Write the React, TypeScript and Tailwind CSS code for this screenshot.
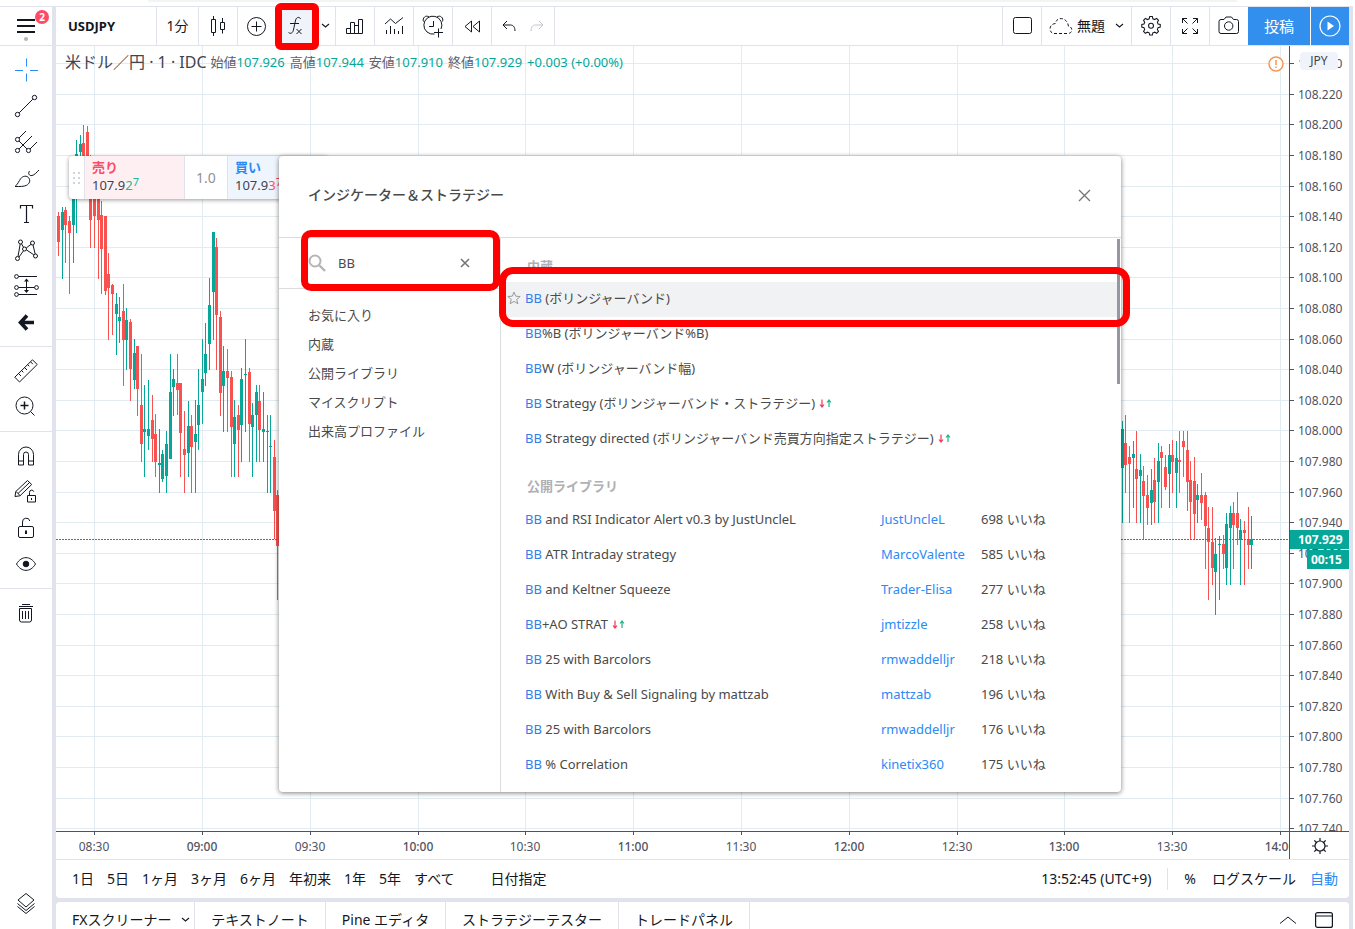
import React, { useState } from "react";

type Candle = [x: number, high: number, low: number, top: number, bottom: number, up: 0 | 1];

const CANDLES: Candle[] = [
  [2, 166, 210, 170, 196, 0], [6, 161, 233, 166, 184, 1], [9, 161, 217, 164, 179, 0], [13, 170, 248, 175, 187, 0],
  [17, 112, 217, 115, 179, 1], [20, 94, 187, 108, 150, 1], [24, 89, 112, 98, 106, 1], [27, 79, 140, 97, 120, 0],
  [31, 80, 150, 86, 130, 0], [34, 109, 202, 115, 174, 0], [38, 115, 202, 120, 170, 0], [42, 120, 233, 140, 174, 0],
  [45, 155, 248, 169, 203, 0], [49, 170, 249, 170, 245, 0], [52, 207, 294, 228, 242, 0], [56, 238, 289, 239, 248, 0],
  [60, 247, 309, 258, 268, 1], [63, 251, 297, 271, 275, 1], [67, 238, 340, 265, 294, 0], [70, 262, 324, 274, 294, 1],
  [74, 273, 355, 276, 323, 0], [78, 293, 343, 307, 334, 1], [81, 300, 370, 300, 343, 0], [85, 308, 416, 359, 398, 0],
  [88, 339, 431, 383, 386, 1], [92, 334, 404, 383, 390, 1], [96, 349, 416, 374, 393, 0], [99, 368, 431, 388, 416, 0],
  [103, 383, 447, 417, 419, 1], [106, 404, 436, 408, 433, 1], [110, 385, 447, 398, 430, 1], [114, 308, 413, 346, 413, 1],
  [117, 323, 370, 333, 341, 1], [121, 308, 369, 337, 344, 0], [124, 337, 431, 337, 387, 0], [128, 365, 447, 403, 409, 0],
  [132, 355, 431, 380, 407, 1], [135, 369, 447, 380, 401, 0], [139, 354, 447, 388, 396, 1], [142, 323, 404, 359, 379, 1],
  [146, 293, 378, 333, 346, 1], [149, 277, 340, 308, 327, 1], [153, 232, 324, 259, 298, 1], [157, 186, 294, 186, 246, 1],
  [160, 192, 324, 201, 269, 0], [164, 265, 370, 271, 347, 0], [167, 300, 386, 325, 340, 1], [171, 303, 386, 325, 332, 0],
  [175, 325, 431, 331, 381, 0], [178, 354, 431, 371, 398, 1], [182, 359, 431, 369, 384, 0], [185, 322, 416, 333, 379, 1],
  [189, 293, 386, 328, 329, 1], [193, 322, 416, 326, 378, 0], [196, 357, 431, 369, 381, 1], [200, 339, 416, 346, 369, 1],
  [203, 339, 416, 355, 384, 0], [207, 346, 416, 383, 386, 1], [211, 369, 447, 385, 386, 1], [214, 369, 447, 400, 401, 1],
  [218, 394, 493, 411, 465, 0], [221, 444, 554, 449, 500, 0],
  [1066, 375, 477, 383, 422, 1], [1069, 369, 447, 397, 419, 0], [1073, 400, 477, 411, 418, 0], [1077, 395, 462, 408, 412, 1],
  [1080, 385, 477, 423, 433, 0], [1084, 408, 477, 424, 430, 1], [1087, 420, 494, 435, 450, 0], [1091, 429, 479, 449, 462, 0],
  [1095, 423, 479, 444, 457, 1], [1098, 412, 477, 434, 456, 0], [1102, 397, 477, 415, 436, 1], [1105, 400, 462, 406, 412, 0],
  [1109, 409, 444, 421, 441, 0], [1113, 398, 462, 409, 428, 1], [1116, 394, 447, 409, 416, 0], [1120, 395, 462, 412, 427, 1],
  [1123, 385, 447, 414, 416, 0], [1127, 385, 431, 395, 401, 0], [1131, 385, 465, 404, 436, 0], [1134, 415, 494, 434, 456, 0],
  [1138, 411, 494, 435, 468, 0], [1141, 438, 477, 449, 454, 1], [1145, 427, 474, 449, 457, 0], [1149, 446, 523, 449, 480, 0],
  [1152, 461, 554, 482, 496, 0], [1156, 461, 539, 496, 522, 0], [1159, 492, 569, 508, 526, 1], [1163, 490, 554, 498, 499, 1],
  [1167, 489, 523, 498, 508, 0], [1170, 467, 539, 478, 522, 1], [1174, 460, 539, 467, 482, 1], [1177, 456, 523, 467, 479, 0],
  [1181, 446, 499, 467, 482, 0], [1184, 473, 539, 484, 494, 1], [1188, 475, 539, 484, 487, 0], [1192, 461, 523, 493, 499, 0],
  [1195, 470, 523, 493, 499, 1],
];

const PRICES = Array.from({ length: 26 }, (_, i) => ({
  label: (108.24 - i * 0.02).toFixed(3),
  y: Math.floor(17.6 + i * 30.6),
}));

const TIMES = ["08:30", "09:00", "09:30", "10:00", "10:30", "11:00", "11:30", "12:00", "12:30", "13:00", "13:30", "14:00"].map(
  (label, i) => ({ label, x: Math.floor(38.6 + i * 107.8) })
);

const Svg: React.FC<{ children: React.ReactNode; color?: string }> = ({ children, color = "#131722" }) => (
  <svg width="28" height="28" viewBox="0 0 28 28" fill="none" stroke={color} strokeWidth="1" aria-hidden="true">
    {children}
  </svg>
);

const Chevron: React.FC = () => (
  <svg width="9" height="6" viewBox="0 0 9 6" fill="none" stroke="#131722" strokeWidth="1.1" aria-hidden="true">
    <path d="M1 1l3.500 3L8 1" />
  </svg>
);

const TOOL_GROUPS: { name: string; icon: React.ReactNode }[][] = [
  [
    {
      name: "クロス",
      icon: <path stroke="#2a8af6" d="M14.500 2.500v8M14.500 17.500v8M3 14.500h8M18 14.500h8" />,
    },
    {
      name: "トレンドライン",
      icon: (
        <>
          <circle cx="5.500" cy="22.500" r="2.200" />
          <circle cx="22.500" cy="5.500" r="2.200" />
          <path d="M7.200 20.800L20.800 7.200" />
        </>
      ),
    },
    {
      name: "ピッチフォーク",
      icon: (
        <>
          <circle cx="5.500" cy="11.500" r="2.100" />
          <circle cx="5.500" cy="22.500" r="2.100" />
          <circle cx="16.500" cy="22.500" r="2.100" />
          <path d="M7 10l7-7M7 21L20 8M18 21l7-7M7 13l8 8" />
        </>
      ),
    },
    {
      name: "ブラシ",
      icon: (
        <>
          <path d="M3 22.500c2.800-2 3.800-5.500 5.800-8 2.200-2.800 6-3 7.800-.8 2.200 2.600 1 6-2 7.600-3 1.400-7 1.200-11.600 1.200z" />
          <path d="M17.500 7c-1.800 2.500-.2 5.200 2.500 4.500C22.500 11 24.500 8.500 27 6" />
        </>
      ),
    },
    {
      name: "テキスト",
      icon: <path strokeWidth="1.200" d="M8.500 8.500V5.500h12v3M14.500 5.500v17M12 22.500h5" />,
    },
    {
      name: "パターン",
      icon: (
        <>
          <circle cx="8.500" cy="6" r="2" />
          <circle cx="20.500" cy="7" r="2" />
          <circle cx="12.500" cy="13" r="2" />
          <circle cx="5.500" cy="22.500" r="2" />
          <circle cx="23.500" cy="20" r="2" />
          <path d="M8.200 8L6 20.500M9.500 7.800l2 3.500M7 21l4.500-6.200M14.200 12l5-3.800M14.400 13.800l7.400 5M21 9l2.200 9" />
        </>
      ),
    },
    {
      name: "予測",
      icon: (
        <>
          <circle cx="4.500" cy="4.500" r="1.900" />
          <circle cx="4.500" cy="15.500" r="1.900" />
          <circle cx="24.500" cy="15.500" r="1.900" />
          <circle cx="4.500" cy="22.500" r="1.900" />
          <path d="M6.500 4.500H25M6.500 15.500h16M6.500 22.500H25M14.500 7v12" />
          <path fill="#131722" stroke="none" d="M12 9.500l2.500-3 2.500 3zM12 18l2.500 3 2.500-3z" />
        </>
      ),
    },
    {
      name: "矢印",
      icon: <path strokeWidth="3.600" d="M22 14.500H9.500M15 7.500l-6.500 7 6.500 7" />,
    },
  ],
  [
    {
      name: "ものさし",
      icon: (
        <>
          <path d="M2.800 20.200L20.500 2.800l4.700 4.700L7.500 25z" />
          <path d="M6.500 16.500l2.500 2.500M9.500 13.500l1.800 1.800M12.500 10.500l2.500 2.500M15.500 7.500l1.800 1.800M18.500 4.800l2.300 2.300" />
        </>
      ),
    },
    {
      name: "ズームイン",
      icon: (
        <>
          <circle cx="12.500" cy="12.500" r="8.500" />
          <path d="M18.500 18.500l4 4" />
          <path strokeWidth="1.500" d="M8.500 12.500h8M12.500 8.500v8" />
        </>
      ),
    },
  ],
  [
    {
      name: "マグネット",
      icon: <path d="M6.500 23V12.500a7.500 7.500 0 0 1 15 0V23h-5V12.500a2.500 2.500 0 0 0-5 0V23zM6.500 19h5M16.500 19h5" />,
    },
    {
      name: "描画モードを維持",
      icon: (
        <>
          <path d="M3 18.500l.8-5L15.500 2.500l4.200 4L8 17.800zM4 13.500l4 4M6 15.500L17.500 4.500" />
          <path d="M15.500 17.500h8v6.500h-8zM17.500 17.500v-3a2.200 2.200 0 0 1 4.300-.8M19.500 20v2" />
        </>
      ),
    },
    {
      name: "ロック",
      icon: (
        <>
          <rect x="6.500" y="12.500" width="15" height="11" rx="1.500" />
          <path d="M10.500 12.500V8a3.700 3.700 0 0 1 7.300-1" />
          <path strokeWidth="2" d="M14 16.500v3.500" />
        </>
      ),
    },
    {
      name: "表示",
      icon: (
        <>
          <path d="M4.500 14c5-8.500 14-8.500 19 0-5 8.500-14 8.500-19 0z" />
          <circle cx="14" cy="14" r="2.800" fill="#131722" />
        </>
      ),
    },
  ],
  [
    {
      name: "削除",
      icon: (
        <>
          <path d="M10 5.500h8M7 7.500h14" />
          <path d="M7.500 9.500h12v11.500a2 2 0 0 1-2 2h-8a2 2 0 0 1-2-2zM10.500 12v8M13.500 12v8M16.500 12v8" />
        </>
      ),
    },
  ],
];

const LeftToolbar: React.FC = () => (
  <aside className="flex w-[52px] shrink-0 flex-col bg-white">
    <button aria-label="メニュー" className="relative flex h-10 shrink-0 items-center justify-center border-y border-[#e0e3eb]">
      <svg width="18" height="14" viewBox="0 0 18 14" stroke="#131722" strokeWidth="2" aria-hidden="true">
        <path d="M0 1h18M0 7h18M0 13h18" />
      </svg>
      <span className="absolute top-[3px] right-[3px] h-[14px] w-[14px] rounded-full bg-[#ff4a68] text-center text-[10px] leading-[14px] font-bold text-white">
        2
      </span>
      <span className="absolute bottom-1 left-6 h-1 w-1 rounded-full bg-[#b2b5be]" />
    </button>
    {TOOL_GROUPS.map((group, i) => (
      <div key={i} className={`py-1.5 ${i < 3 ? "border-b border-[#e0e3eb]" : ""}`}>
        {group.map((tool) => (
          <button key={tool.name} aria-label={tool.name} className="flex h-9 w-full items-center justify-center">
            <Svg>{tool.icon}</Svg>
          </button>
        ))}
      </div>
    ))}
    <button aria-label="オブジェクトツリー" className="mt-auto mb-2 flex h-9 items-center justify-center">
      <Svg>
        <path d="M14 4.500l8 6.500-8 7-8-7z" />
        <path d="M5.500 14.500l8.500 7 8.500-7M5.500 17.500l8.500 7 8.500-7" />
      </Svg>
    </button>
  </aside>
);

const cell = "flex h-full items-center border-r border-[#e0e3eb]";

const Header: React.FC = () => (
  <header className="flex h-10 shrink-0 border-y border-[#e0e3eb] bg-white text-sm leading-5">
    <button className={`${cell} w-[101px] pl-3 text-[13px] font-bold`}>USDJPY</button>
    <button className={`${cell} w-[42px] justify-center`}>1分</button>
    <button aria-label="ローソク足" className={`${cell} w-[39px] justify-center`}>
      <Svg>
        <path d="M7.500 7.500h4v13h-4zM9.500 4v3.500M9.500 20.500V24M16.500 10.500h4v7h-4zM18.500 6v4.500M18.500 17.500v4" />
      </Svg>
    </button>
    <button aria-label="比較" className={`${cell} w-[38px] justify-center`}>
      <Svg>
        <circle cx="13.500" cy="14.500" r="9" />
        <path d="M8.500 14.500h10M13.500 9.500v10" />
      </Svg>
    </button>
    <div className={`${cell} w-[60px]`}>
      <button aria-label="インジケーター" className="flex h-full w-[39px] items-center justify-center bg-[#f0f3fa]">
        <Svg>
          <path d="M18.500 7c-.4-2-3.800-2.500-4.800.8C12.900 10.500 12.200 15 11.300 18.500c-.8 3.200-3.600 3.500-4.800 1.800M8 11.500h9" />
          <path d="M14.500 17l5 5M19.500 17l-5 5" />
        </Svg>
      </button>
      <button aria-label="お気に入りのインジケーター" className="flex h-full flex-1 items-center justify-center">
        <Chevron />
      </button>
    </div>
    <button aria-label="財務" className={`${cell} w-[39px] justify-center`}>
      <Svg>
        <path d="M5.500 16.500h4v5h-4zM9.500 10.500h4v11h-4zM13.500 13.500h4v8h-4zM17.500 7.500h4v14h-4z" />
      </Svg>
    </button>
    <button aria-label="テンプレート" className={`${cell} w-[39px] justify-center`}>
      <Svg>
        <path d="M5 12l5.500-5 5 4.500L23 5.500M6.500 18v4M10.500 14v8M14.500 17v5M18.500 19v3M22.500 14v8" />
      </Svg>
    </button>
    <button aria-label="アラート" className={`${cell} w-[39px] justify-center`}>
      <Svg>
        <path d="M22 17A9 9 0 1 0 15.500 22M14.500 9v5.500H10M19.500 16.500v9M15 20.500h9" />
        <path d="M4.500 9.500C3 6 7 2.500 10 5M23.500 9.500C25 6 21 2.500 18 5" />
      </Svg>
    </button>
    <button aria-label="リプレイ" className={`${cell} w-[39px] justify-center`}>
      <Svg>
        <path d="M13.500 9v11L7 14.500zM21.500 9v11L15 14.500z" />
      </Svg>
    </button>
    <div className={`${cell} w-[63px] justify-center`}>
      <button aria-label="元に戻す">
        <Svg>
          <path d="M12 9l-4 4 4 4M8 13h7.500c3 0 4.500 2.500 4.500 6" />
        </Svg>
      </button>
      <button aria-label="やり直し">
        <Svg color="#c1c4cd">
          <path d="M16 9l4 4-4 4M20 13h-7.500c-3 0-4.500 2.500-4.500 6" />
        </Svg>
      </button>
    </div>

    <div className="ml-auto flex h-full">
      <button aria-label="レイアウト" className={`${cell} w-10 justify-center border-l`}>
        <Svg>
          <rect x="5.500" y="5.500" width="18" height="16" rx="2" />
        </Svg>
      </button>
      <button className={`${cell} w-[90px] justify-center gap-1`}>
        <svg width="24" height="18" viewBox="0 0 24 18" fill="none" stroke="#131722" strokeDasharray="3 2" aria-hidden="true">
          <path d="M5 16.500h14c5 0 5-7 .5-7C18.500 -.5 7 -.5 6.500 6.500 -.5 7 -.5 16 5 16.500z" />
        </svg>
        無題
        <span className="ml-1.5">
          <Chevron />
        </span>
      </button>
      <button aria-label="設定" className={`${cell} w-[39px] justify-center`}>
        <Svg>
          <g transform="translate(1.700 .6) scale(.88)" strokeWidth="1.200">
            <path d="M12.500 4.500h3l.6 2.500 2 .9 2.300-1.300 2.100 2.100-1.300 2.300.8 2 2.500.5v3l-2.500.6-.8 2 1.300 2.300-2.100 2.100-2.300-1.300-2 .8-.6 2.500h-3l-.6-2.500-2-.8-2.300 1.300-2.100-2.100 1.300-2.300-.8-2-2.500-.6v-3l2.500-.5.800-2-1.300-2.300 2.100-2.100L9.900 7.900l2-.9z" />
            <circle cx="14" cy="15" r="2.800" />
          </g>
        </Svg>
      </button>
      <button aria-label="全画面" className={`${cell} w-[39px] justify-center`}>
        <Svg>
          <path d="M6.500 11V6.500H11M6.500 6.500l5 5M17 6.500h4.500V11M21.500 6.500l-5 5M6.500 17v4.500H11M6.500 21.500l5-5M17 21.500h4.500V17M21.500 21.500l-5-5" />
        </Svg>
      </button>
      <button aria-label="スナップショット" className="flex h-full w-[38px] items-center justify-center">
        <Svg>
          <path d="M6 7.500h3l2-2.500h5.500l2 2.500H21.500a2 2 0 0 1 2 2v10a2 2 0 0 1-2 2H6a2 2 0 0 1-2-2v-10a2 2 0 0 1 2-2z" />
          <circle cx="13.700" cy="14" r="4.200" />
        </Svg>
      </button>
      <button className="mr-px flex h-full w-[62px] items-center justify-center bg-[#338fee] text-[15px] text-white">投稿</button>
      <button aria-label="再生" className="flex h-full w-[38px] items-center justify-center bg-[#338fee]">
        <Svg color="#fff">
          <circle cx="14" cy="14" r="10" strokeWidth="1.200" />
          <path fill="#fff" stroke="none" d="M11.500 9.500l6.500 4.500-6.500 4.500z" />
        </Svg>
      </button>
    </div>
  </header>
);

const Plot: React.FC = () => (
  <svg className="h-full w-full" shapeRendering="crispEdges" aria-label="USDJPY チャート">
    {PRICES.map((p) => (
      <rect key={p.label} x="0" y={p.y} width="100%" height="1" fill="#e1ecf2" />
    ))}
    {TIMES.map((t) => (
      <rect key={t.label} x={t.x} y="0" width="1" height="100%" fill="#e1ecf2" />
    ))}
    {CANDLES.map(([x, high, low, top, bottom, up]) => (
      <g key={x} fill={up ? "#06a799" : "#f7524f"}>
        <rect x={x} y={high} width="1" height={low - high} />
        <rect x={x - 1} y={top} width="3" height={bottom - top} />
      </g>
    ))}
    <line x1="0" x2="100%" y1="493.500" y2="493.500" stroke="#0a9b8e" strokeDasharray="2 1" />
  </svg>
);

const LEGEND = [
  ["始値", "107.926"],
  ["高値", "107.944"],
  ["安値", "107.910"],
  ["終値", "107.929"],
];

const Legend: React.FC = () => (
  <div className="absolute top-1.5 left-[9px] flex items-center text-[13px] leading-5 whitespace-nowrap text-[#06a799]">
    <span className="mr-1 text-base leading-5 text-[#41444f]">米ドル／円 · 1 · IDC</span>
    <span className="flex gap-[5px]">
      {LEGEND.map(([label, value]) => (
        <span key={label}>
          <span className="text-[#5d606b]">{label}</span>
          {value}
        </span>
      ))}
      <span>+0.003 (+0.00%)</span>
    </span>
  </div>
);

const QuotePanel: React.FC = () => (
  <div className="absolute top-[110px] left-[13px] flex h-[43px] overflow-hidden rounded bg-white text-[#41444f] shadow-[0_1px_4px_rgba(0,0,0,0.4)]">
    <span className="grid w-[15px] grid-cols-[2px_2px] content-center justify-center gap-[3px]">
      {Array.from({ length: 6 }, (_, i) => (
        <i key={i} className="h-0.5 w-0.5 bg-[#d1d4dc]" />
      ))}
    </span>
    <button className="w-[101px] border-x border-[#e0e3eb] bg-[#fef0f2] pb-1 pl-[7px] text-left text-[13px] leading-[18px]">
      <b className="block text-[#ff4a68]">売り</b>
      <span className="block">
        107.9<span className="text-[#22b795]">2<span className="relative -top-1 text-[11px] leading-none">7</span></span>
      </span>
    </button>
    <button className="w-[42px] text-sm text-[#8f929c]">1.0</button>
    <button className="w-[101px] border-l border-[#e0e3eb] bg-[#eff5fd] pb-1 pl-[7px] text-left text-[13px] leading-[18px]">
      <b className="block text-[#2a8af6]">買い</b>
      <span className="block">
        107.9<span className="text-[#ff4a68]">3<span className="relative -top-1 text-[11px] leading-none">7</span></span>
      </span>
    </button>
  </div>
);

const PriceAxis: React.FC = () => (
  <div className="relative w-[60px] shrink-0 overflow-hidden border-l border-[#50535e] text-xs">
    <svg className="h-full w-full" shapeRendering="crispEdges" aria-label="価格">
      {PRICES.map((p) => (
        <g key={p.label}>
          <rect x="0" y={p.y} width="4" height="1" fill="#50535e" />
          <text x="8" y={p.y + 5} fill="#50535e">
            {p.label}
          </text>
        </g>
      ))}
    </svg>
    <button className="absolute top-1.5 left-2.5 h-[18px] w-[38px] rounded bg-[#f0f3fa] text-xs leading-[18px] text-[#41444f]">JPY</button>
    <span className="absolute top-[484px] right-0 left-0 h-[19px] bg-[#06a799] pl-2 text-xs leading-[19px] font-bold text-white">
      107.929
    </span>
    <span className="absolute top-[504px] right-0 h-[19px] w-[42px] bg-[#06a799] pl-1 text-xs leading-[19px] font-bold text-white">
      00:15
    </span>
  </div>
);

const Chart: React.FC = () => (
  <section className="flex min-h-0 flex-1 flex-col bg-white">
    <div className="flex min-h-0 flex-1 border-b border-[#50535e]">
      <div className="relative min-w-0 flex-1 overflow-hidden">
        <Plot />
        <Legend />
        <QuotePanel />
        <span className="absolute top-2.5 right-[5px]">
          <svg width="16" height="16" viewBox="0 0 16 16" fill="#fff" stroke="#fb9450" strokeWidth="1.500" aria-hidden="true">
            <circle cx="8" cy="8" r="7" />
            <path d="M8 4v5M8 10.500v1.500" />
          </svg>
        </span>
      </div>
      <PriceAxis />
    </div>
    <div className="flex h-7 shrink-0 border-b border-[#e0e3eb] text-xs">
      <svg className="h-full min-w-0 flex-1" aria-label="時間">
        {TIMES.map((t, i) => (
          <g key={t.label}>
            <rect x={t.x} y="0" width="1" height="3" fill="#50535e" />
            <text x={t.x} y="19" textAnchor="middle" fill="#50535e" fontWeight={i % 2 ? 500 : 400}>
              {t.label}
            </text>
          </g>
        ))}
      </svg>
      <button aria-label="軸の設定" className="flex w-[60px] items-center justify-center border-l border-[#50535e]">
        <svg width="16" height="16" viewBox="0 0 16 16" fill="none" stroke="#131722" strokeWidth="1.200" aria-hidden="true">
          <circle cx="8" cy="8" r="5" />
          <path d="M8 0v3M8 13v3M0 8h3M13 8h3M2.300 2.300l2.200 2.200M11.500 11.500l2.200 2.200M2.300 13.700l2.200-2.200M11.500 4.500l2.200-2.200" />
        </svg>
      </button>
    </div>
  </section>
);

const RANGES = ["1日", "5日", "1ヶ月", "3ヶ月", "6ヶ月", "年初来", "1年", "5年", "すべて"];

const RangeBar: React.FC = () => (
  <div className="flex h-[38px] shrink-0 items-center rounded-b bg-white pr-[11px] pl-4 text-sm leading-5 text-[#131722]">
    <div className="flex gap-[13px]">
      {RANGES.map((r) => (
        <button key={r}>{r}</button>
      ))}
    </div>
    <button className="ml-9">日付指定</button>
    <button className="ml-auto">13:52:45 (UTC+9)</button>
    <span className="mx-4 h-[22px] w-px bg-[#e0e3eb]" />
    <button>%</button>
    <button className="ml-4">ログスケール</button>
    <button className="ml-3.5 text-[#2a8af6]">自動</button>
  </div>
);

const BottomTabs: React.FC = () => (
  <footer className="flex h-[27px] shrink-0 overflow-hidden rounded-t bg-white text-sm text-[#131722]">
    <button className="flex h-9 w-[139px] items-center justify-between border-r border-[#e0e3eb] pr-1 pl-4">
      FXスクリーナー
      <Chevron />
    </button>
    <button className="h-9 w-[131px] border-r border-[#e0e3eb]">テキストノート</button>
    <button className="h-9 w-[120px] border-r border-[#e0e3eb]">Pine エディタ</button>
    <button className="h-9 w-[173px] border-r border-[#e0e3eb]">ストラテジーテスター</button>
    <button className="h-9 w-[131px] border-r border-[#e0e3eb]">トレードパネル</button>
    <div className="ml-auto flex h-9 items-center gap-[18px] pr-4">
      <button aria-label="パネルを開く">
        <svg width="18" height="8" viewBox="0 0 18 8" fill="none" stroke="#131722" aria-hidden="true">
          <path d="M1 7.500L9 1l8 6.500" />
        </svg>
      </button>
      <button aria-label="パネルを最大化">
        <svg width="18" height="16" viewBox="0 0 18 16" fill="none" stroke="#131722" strokeWidth="1.200" aria-hidden="true">
          <rect x=".6" y=".6" width="16.800" height="14.800" rx="2" />
          <path d="M.6 4h16.800" />
        </svg>
      </button>
    </div>
  </footer>
);

const CATEGORIES = ["お気に入り", "内蔵", "公開ライブラリ", "マイスクリプト", "出来高プロファイル"];

const BUILT_INS = [
  { rest: " (ボリンジャーバンド)" },
  { rest: "%B (ボリンジャーバンド%B)" },
  { rest: "W (ボリンジャーバンド幅)" },
  { rest: " Strategy (ボリンジャーバンド・ストラテジー)", strategy: true },
  { rest: " Strategy directed (ボリンジャーバンド売買方向指定ストラテジー)", strategy: true },
];

const LIBRARY = [
  { rest: " and RSI Indicator Alert v0.3 by JustUncleL", author: "JustUncleL", likes: 698 },
  { rest: " ATR Intraday strategy", author: "MarcoValente", likes: 585 },
  { rest: " and Keltner Squeeze", author: "Trader-Elisa", likes: 277 },
  { rest: "+AO STRAT", author: "jmtizzle", likes: 258, strategy: true },
  { rest: " 25 with Barcolors", author: "rmwaddelljr", likes: 218 },
  { rest: " With Buy & Sell Signaling by mattzab", author: "mattzab", likes: 196 },
  { rest: " 25 with Barcolors", author: "rmwaddelljr", likes: 176 },
  { rest: " % Correlation", author: "kinetix360", likes: 175 },
];

const ScriptName: React.FC<{ rest: string; strategy?: boolean }> = ({ rest, strategy }) => (
  <span className="inline-flex items-center whitespace-pre">
    <span className="text-[#2f80ed]">BB</span>
    {rest}
    {strategy && (
      <svg className="ml-1" width="13" height="10" viewBox="0 0 13 10" fill="none" strokeWidth="1.200" aria-hidden="true">
        <path stroke="#f23654" d="M3 1.500V9M1 6.500L3 9l2-2.500" />
        <path stroke="#1db388" d="M10 9V2M8 4.500L10 2l2 2.500" />
      </svg>
    )}
  </span>
);

const IndicatorDialog: React.FC = () => {
  const [query, setQuery] = useState("BB");

  return (
    <div
      role="dialog"
      aria-label="インジケーター＆ストラテジー"
      className="absolute top-[156px] left-[279px] flex h-[636px] w-[842px] flex-col rounded-sm bg-white text-[13px] leading-5 text-[#4a4a4a] shadow-[0_1px_5px_rgba(0,0,0,0.5)]"
    >
      <div className="flex h-[82px] shrink-0 items-center justify-between border-b border-[#dadde0] pr-[30px] pb-[3px] pl-[29px]">
        <h2 className="text-sm font-medium">インジケーター＆ストラテジー</h2>
        <button aria-label="閉じる">
          <svg width="13" height="13" viewBox="0 0 13 13" stroke="#757575" strokeWidth="1.300" aria-hidden="true">
            <path d="M1 1l11 11M12 1L1 12" />
          </svg>
        </button>
      </div>
      <div className="flex min-h-0 flex-1">
        <nav className="w-[222px] shrink-0 border-r border-[#dadde0]">
          <div className="flex h-[51px] items-center border-b border-[#dadde0] pl-[29px]">
            <svg width="18" height="18" viewBox="0 0 18 18" fill="none" stroke="#b5b5b5" strokeWidth="2" aria-hidden="true">
              <circle cx="7" cy="7" r="5.500" />
              <path strokeWidth="2.400" d="M11 11l6 6" />
            </svg>
            <input
              aria-label="検索"
              value={query}
              onChange={(e) => setQuery(e.target.value)}
              className="ml-3 w-[120px] outline-none"
            />
            <button aria-label="クリア" onClick={() => setQuery("")} className="ml-0.5">
              <svg width="10" height="10" viewBox="0 0 10 10" stroke="#757575" strokeWidth="1.600" aria-hidden="true">
                <path d="M1 1l8 8M9 1L1 9" />
              </svg>
            </button>
          </div>
          <div className="flex flex-col pt-[11px]">
            {CATEGORIES.map((c) => (
              <button key={c} className="h-[29px] pl-[29px] text-left">
                {c}
              </button>
            ))}
          </div>
        </nav>
        <div className="relative min-w-0 flex-1 overflow-hidden pr-1">
          <h3 className="mt-[18px] mb-1.5 pl-[26px] font-bold text-[#aeb0b4]">内蔵</h3>
          <ul>
            {BUILT_INS.map((s, i) => (
              <li key={s.rest} className={`flex h-[35px] items-center pb-[3px] ${i === 0 ? "bg-[#f1f2f4]" : ""}`}>
                <span className="flex w-6 justify-end pr-1">
                  {i === 0 && (
                    <svg width="14" height="14" viewBox="0 0 14 14" fill="none" stroke="#9a9a9a" aria-hidden="true">
                      <path d="M7 1l1.700 4.200 4.500.3-3.500 2.900 1.200 4.400L7 10.400l-3.900 2.400 1.200-4.400L.8 5.500l4.500-.3z" />
                    </svg>
                  )}
                </span>
                <button>
                  <ScriptName {...s} />
                </button>
              </li>
            ))}
          </ul>
          <h3 className="mt-[19px] mb-1.5 pl-[26px] font-bold text-[#aeb0b4]">公開ライブラリ</h3>
          <table className="w-full table-fixed text-left">
            <tbody>
              {LIBRARY.map((s) => (
                <tr key={s.likes} className="h-[35px]">
                  <td className="w-[380px] pb-0.5 pl-6">
                    <ScriptName rest={s.rest} strategy={s.strategy} />
                  </td>
                  <td className="w-[100px] pb-0.5">
                    <a href="#author" className="text-[#2a8af6]">
                      {s.author}
                    </a>
                  </td>
                  <td className="pb-0.5">{s.likes} いいね</td>
                </tr>
              ))}
            </tbody>
          </table>
          <span className="absolute top-px right-px h-[145px] w-[3px] bg-[#9598a1]" />
        </div>
      </div>
    </div>
  );
};

// Red frames that point out the three steps
const Callouts: React.FC = () => (
  <>
    <span className="pointer-events-none absolute top-[3px] left-[275px] h-[47px] w-11 rounded-md border-[7px] border-[#fe0000]" />
    <span className="pointer-events-none absolute top-[230px] left-[301px] h-[61px] w-[199px] rounded-[10px] border-[7px] border-[#fe0000]" />
    <span className="pointer-events-none absolute top-[267px] left-[499px] h-[60px] w-[631px] rounded-[14px] border-[7px] border-[#fe0000]" />
  </>
);

const App: React.FC = () => {
  return (
    <div className="relative flex h-screen flex-col overflow-hidden bg-white font-['Noto_Sans','Noto_Sans_CJK_JP',sans-serif] text-[#131722]">
      <div className="h-1.5 shrink-0 pr-[118px] pl-[148px]">
        <div className="h-0.5 rounded-b bg-[#f1f3f4]" />
      </div>
      <div className="flex min-h-0 flex-1 pr-0.5">
        <LeftToolbar />
        <main className="flex min-w-0 flex-1 flex-col bg-[#e0e3eb] px-1">
          <Header />
          <Chart />
          <RangeBar />
          <div className="h-1 shrink-0" />
          <BottomTabs />
        </main>
      </div>
      <IndicatorDialog />
      <Callouts />
    </div>
  );
};

export default App;
